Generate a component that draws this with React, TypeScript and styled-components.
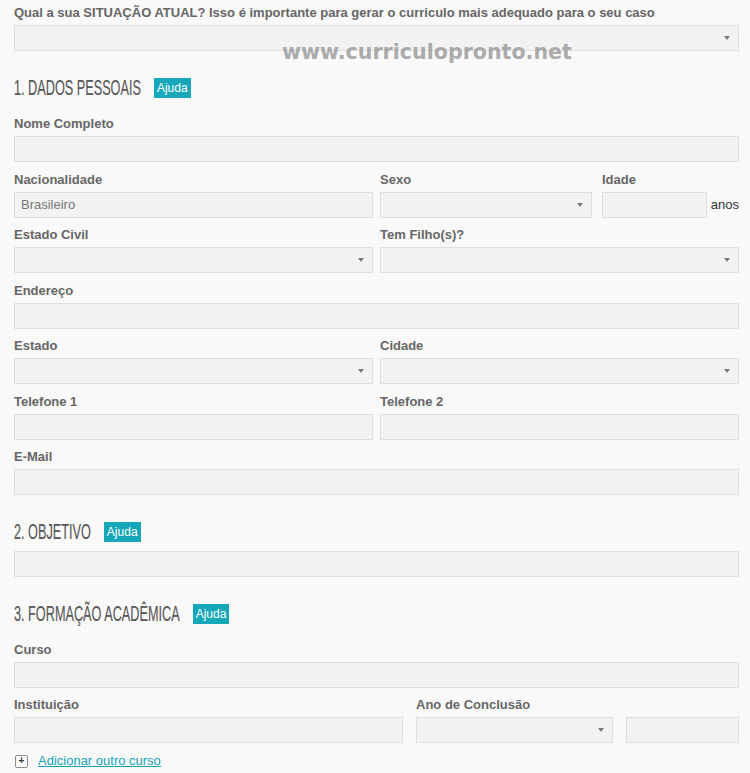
import styled, { createGlobalStyle } from 'styled-components';

const GlobalStyle = createGlobalStyle`
  html, body {
    margin: 0;
    padding: 0;
    background: #f9f9f9;
    min-height: 100vh;
  }
  body {
    font-family: "Liberation Sans", Arial, sans-serif;
  }
`;

const Page = styled.form`
  position: relative;
  display: flex;
  flex-direction: column;
  width: 725px;
  padding: 5px 0 0 14px;
`;

const Watermark = styled.div`
  position: absolute;
  left: 282px;
  top: 40px;
  font: bold 20.6px/24px "DejaVu Sans", Verdana, sans-serif;
  color: rgba(150, 150, 150, 0.8);
  white-space: nowrap;
  pointer-events: none;
`;

const Label = styled.label`
  display: block;
  font: bold 13px/16px "Liberation Sans", Arial, sans-serif;
  color: #666;
  margin-bottom: 4px;
  white-space: nowrap;
`;

const TextInput = styled.input`
  display: block;
  width: 100%;
  height: 26px;
  box-sizing: border-box;
  margin: 0;
  padding: 0 6px;
  background: #f2f2f2;
  border: 1px solid #dedede;
  font: 13px "Liberation Sans", Arial, sans-serif;
  color: #777;
  outline: none;
`;

const SelectBox = styled.div`
  position: relative;
  height: 26px;
  box-sizing: border-box;
  background: #f2f2f2;
  border: 1px solid #dedede;
  &::after {
    content: '';
    position: absolute;
    right: 8px;
    top: 10px;
    border-left: 3px solid transparent;
    border-right: 3px solid transparent;
    border-top: 4px solid #7a7a7a;
  }
`;

const Heading = styled.h2`
  display: flex;
  align-items: center;
  gap: 13px;
  height: 20px;
  margin: 27px 0 8.5px;
  font-weight: normal;
`;

const HeadingText = styled.span`
  display: inline-block;
  font: 12.7px/20px "Liberation Sans", Arial, sans-serif;
  color: #585858;
  -webkit-text-stroke: 0.1px #585858;
  transform: scaleY(1.76);
  white-space: nowrap;
`;

const HelpBadge = styled.span`
  display: inline-block;
  height: 20px;
  padding: 0 3px;
  background: #16a7b8;
  color: #fff;
  font: 12px/20px "Liberation Sans", Arial, sans-serif;
`;

const Row = styled.div<{ $cols: string; $gap: number }>`
  display: grid;
  grid-template-columns: ${(p) => p.$cols};
  column-gap: ${(p) => p.$gap}px;
  margin-top: 9.5px;
`;

const Field = styled.div<{ $indent?: number }>`
  min-width: 0;
  margin-left: ${(p) => p.$indent ?? 0}px;
`;

const InlineInput = styled.div`
  display: flex;
  align-items: center;
  gap: 4px;
`;

const Unit = styled.span`
  font: 13px "Liberation Sans", Arial, sans-serif;
  color: #333;
`;

const AddRow = styled.div`
  display: flex;
  align-items: center;
  gap: 10px;
  height: 16px;
  margin-top: 10px;
  padding-left: 1px;
`;

const PlusBox = styled.span`
  display: flex;
  align-items: center;
  justify-content: center;
  width: 11px;
  height: 11px;
  border: 1px solid #8c8c8c;
  border-radius: 2px;
  background: #fff;
  color: #333;
  font: bold 10px/1 "Liberation Sans", Arial, sans-serif;
`;

const AddLink = styled.a`
  font: 13px/16px "Liberation Sans", Arial, sans-serif;
  color: #1aa2b4;
  text-decoration: underline;
  cursor: pointer;
`;

function Section({ title }: { title: string }) {
  return (
    <Heading>
      <HeadingText>{title}</HeadingText>
      <HelpBadge>Ajuda</HelpBadge>
    </Heading>
  );
}

export default function App() {
  return (
    <>
      <GlobalStyle />
      <Page onSubmit={(e) => e.preventDefault()}>
        <Label>
          Qual a sua SITUAÇÃO ATUAL? Isso é importante para gerar o curriculo mais adequado para o seu caso
        </Label>
        <SelectBox />
        <Watermark>www.curriculopronto.net</Watermark>

        <Section title="1. DADOS PESSOAIS" />
        <Row $cols="1fr" $gap={0}>
          <Field>
            <Label>Nome Completo</Label>
            <TextInput />
          </Field>
        </Row>
        <Row $cols="359px 212px 1fr" $gap={7}>
          <Field>
            <Label>Nacionalidade</Label>
            <TextInput defaultValue="Brasileiro" />
          </Field>
          <Field>
            <Label>Sexo</Label>
            <SelectBox />
          </Field>
          <Field $indent={3}>
            <Label>Idade</Label>
            <InlineInput>
              <TextInput />
              <Unit>anos</Unit>
            </InlineInput>
          </Field>
        </Row>
        <Row $cols="1fr 1fr" $gap={7}>
          <Field>
            <Label>Estado Civil</Label>
            <SelectBox />
          </Field>
          <Field>
            <Label>Tem Filho(s)?</Label>
            <SelectBox />
          </Field>
        </Row>
        <Row $cols="1fr" $gap={0}>
          <Field>
            <Label>Endereço</Label>
            <TextInput />
          </Field>
        </Row>
        <Row $cols="1fr 1fr" $gap={7}>
          <Field>
            <Label>Estado</Label>
            <SelectBox />
          </Field>
          <Field>
            <Label>Cidade</Label>
            <SelectBox />
          </Field>
        </Row>
        <Row $cols="1fr 1fr" $gap={7}>
          <Field>
            <Label>Telefone 1</Label>
            <TextInput />
          </Field>
          <Field>
            <Label>Telefone 2</Label>
            <TextInput />
          </Field>
        </Row>
        <Row $cols="1fr" $gap={0}>
          <Field>
            <Label>E-Mail</Label>
            <TextInput />
          </Field>
        </Row>

        <Section title="2. OBJETIVO" />
        <TextInput />

        <Section title="3. FORMAÇÃO ACADÊMICA" />
        <Row $cols="1fr" $gap={0}>
          <Field>
            <Label>Curso</Label>
            <TextInput />
          </Field>
        </Row>
        <Row $cols="389px 197px 1fr" $gap={13}>
          <Field>
            <Label>Instituição</Label>
            <TextInput />
          </Field>
          <Field>
            <Label>Ano de Conclusão</Label>
            <SelectBox />
          </Field>
          <Field>
            <Label>&nbsp;</Label>
            <TextInput />
          </Field>
        </Row>
        <AddRow>
          <PlusBox>+</PlusBox>
          <AddLink>Adicionar outro curso</AddLink>
        </AddRow>
      </Page>
    </>
  );
}
